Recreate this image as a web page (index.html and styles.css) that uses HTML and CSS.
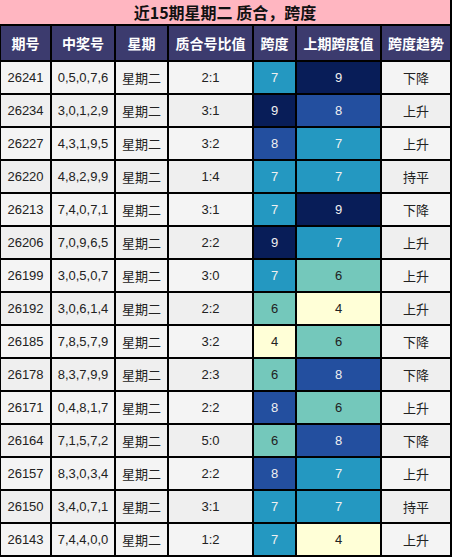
FILE: index.html
```html
<!DOCTYPE html>
<html lang="zh">
<head>
<meta charset="utf-8">
<link rel="stylesheet" href="styles.css">
</head>
<body>
<div class="table">
  <div class="title">近15期星期二 质合，跨度</div>
  <div class="th">期号</div><div class="th">中奖号</div><div class="th">星期</div><div class="th">质合号比值</div><div class="th">跨度</div><div class="th">上期跨度值</div><div class="th">跨度趋势</div>

  <div class="td a">26241</div><div class="td a">0,5,0,7,6</div><div class="td a">星期二</div><div class="td a">2:1</div><div class="td c7">7</div><div class="td c9">9</div><div class="td a">下降</div>
  <div class="td b">26234</div><div class="td b">3,0,1,2,9</div><div class="td b">星期二</div><div class="td b">3:1</div><div class="td c9">9</div><div class="td c8">8</div><div class="td b">上升</div>
  <div class="td a">26227</div><div class="td a">4,3,1,9,5</div><div class="td a">星期二</div><div class="td a">3:2</div><div class="td c8">8</div><div class="td c7">7</div><div class="td a">上升</div>
  <div class="td b">26220</div><div class="td b">4,8,2,9,9</div><div class="td b">星期二</div><div class="td b">1:4</div><div class="td c7">7</div><div class="td c7">7</div><div class="td b">持平</div>
  <div class="td a">26213</div><div class="td a">7,4,0,7,1</div><div class="td a">星期二</div><div class="td a">3:1</div><div class="td c7">7</div><div class="td c9">9</div><div class="td a">下降</div>
  <div class="td b">26206</div><div class="td b">7,0,9,6,5</div><div class="td b">星期二</div><div class="td b">2:2</div><div class="td c9">9</div><div class="td c7">7</div><div class="td b">上升</div>
  <div class="td a">26199</div><div class="td a">3,0,5,0,7</div><div class="td a">星期二</div><div class="td a">3:0</div><div class="td c7">7</div><div class="td c6">6</div><div class="td a">上升</div>
  <div class="td b">26192</div><div class="td b">3,0,6,1,4</div><div class="td b">星期二</div><div class="td b">2:2</div><div class="td c6">6</div><div class="td c4">4</div><div class="td b">上升</div>
  <div class="td a">26185</div><div class="td a">7,8,5,7,9</div><div class="td a">星期二</div><div class="td a">3:2</div><div class="td c4">4</div><div class="td c6">6</div><div class="td a">下降</div>
  <div class="td b">26178</div><div class="td b">8,3,7,9,9</div><div class="td b">星期二</div><div class="td b">2:3</div><div class="td c6">6</div><div class="td c8">8</div><div class="td b">下降</div>
  <div class="td a">26171</div><div class="td a">0,4,8,1,7</div><div class="td a">星期二</div><div class="td a">2:2</div><div class="td c8">8</div><div class="td c6">6</div><div class="td a">上升</div>
  <div class="td b">26164</div><div class="td b">7,1,5,7,2</div><div class="td b">星期二</div><div class="td b">5:0</div><div class="td c6">6</div><div class="td c8">8</div><div class="td b">下降</div>
  <div class="td a">26157</div><div class="td a">8,3,0,3,4</div><div class="td a">星期二</div><div class="td a">2:2</div><div class="td c8">8</div><div class="td c7">7</div><div class="td a">上升</div>
  <div class="td b">26150</div><div class="td b">3,4,0,7,1</div><div class="td b">星期二</div><div class="td b">3:1</div><div class="td c7">7</div><div class="td c7">7</div><div class="td b">持平</div>
  <div class="td a">26143</div><div class="td a">7,4,4,0,0</div><div class="td a">星期二</div><div class="td a">1:2</div><div class="td c7">7</div><div class="td c4">4</div><div class="td a">上升</div>
</div>
</body>
</html>
```

FILE: styles.css
```css
html, body {
  margin: 0;
  padding: 0;
  background: #ffffff;
}
body {
  font-family: "Liberation Sans", "Noto Sans CJK SC", sans-serif;
}
.table {
  width: 452px;
  box-sizing: border-box;
  display: grid;
  grid-template-columns: 49px 62px 51px 83px 41px 83px 68px;
  grid-template-rows: 24px 34px repeat(15, 31px);
  gap: 2px;
  padding: 0 2px 2px 1px;
  background: #000000;
}
.title {
  grid-column: 1 / -1;
  background: #ffb6c1;
  color: #111111;
  font-size: 16px;
  font-weight: bold;
  display: flex;
  align-items: center;
  justify-content: center;
  margin-left: -1px;
  font-family: "Noto Sans CJK SC", "Liberation Sans", sans-serif;
}
.th {
  background: #3c3b6e;
  color: #ffffff;
  font-size: 14px;
  font-weight: bold;
  display: flex;
  align-items: center;
  justify-content: center;
  white-space: nowrap;
  font-family: "Liberation Sans", "Noto Sans CJK SC", sans-serif;
}
.td {
  font-size: 13px;
  color: #222222;
  display: flex;
  align-items: center;
  justify-content: center;
  white-space: nowrap;
}
.a { background: #f4f4f4; }
.b { background: #efefef; }
.c9 { background: #081d58; color: #f0f0f0; }
.c8 { background: #234f9f; color: #f0f0f0; }
.c7 { background: #2498c1; color: #f0f0f0; }
.c6 { background: #74c8bb; color: #222222; }
.c4 { background: #ffffd7; color: #222222; }
```
